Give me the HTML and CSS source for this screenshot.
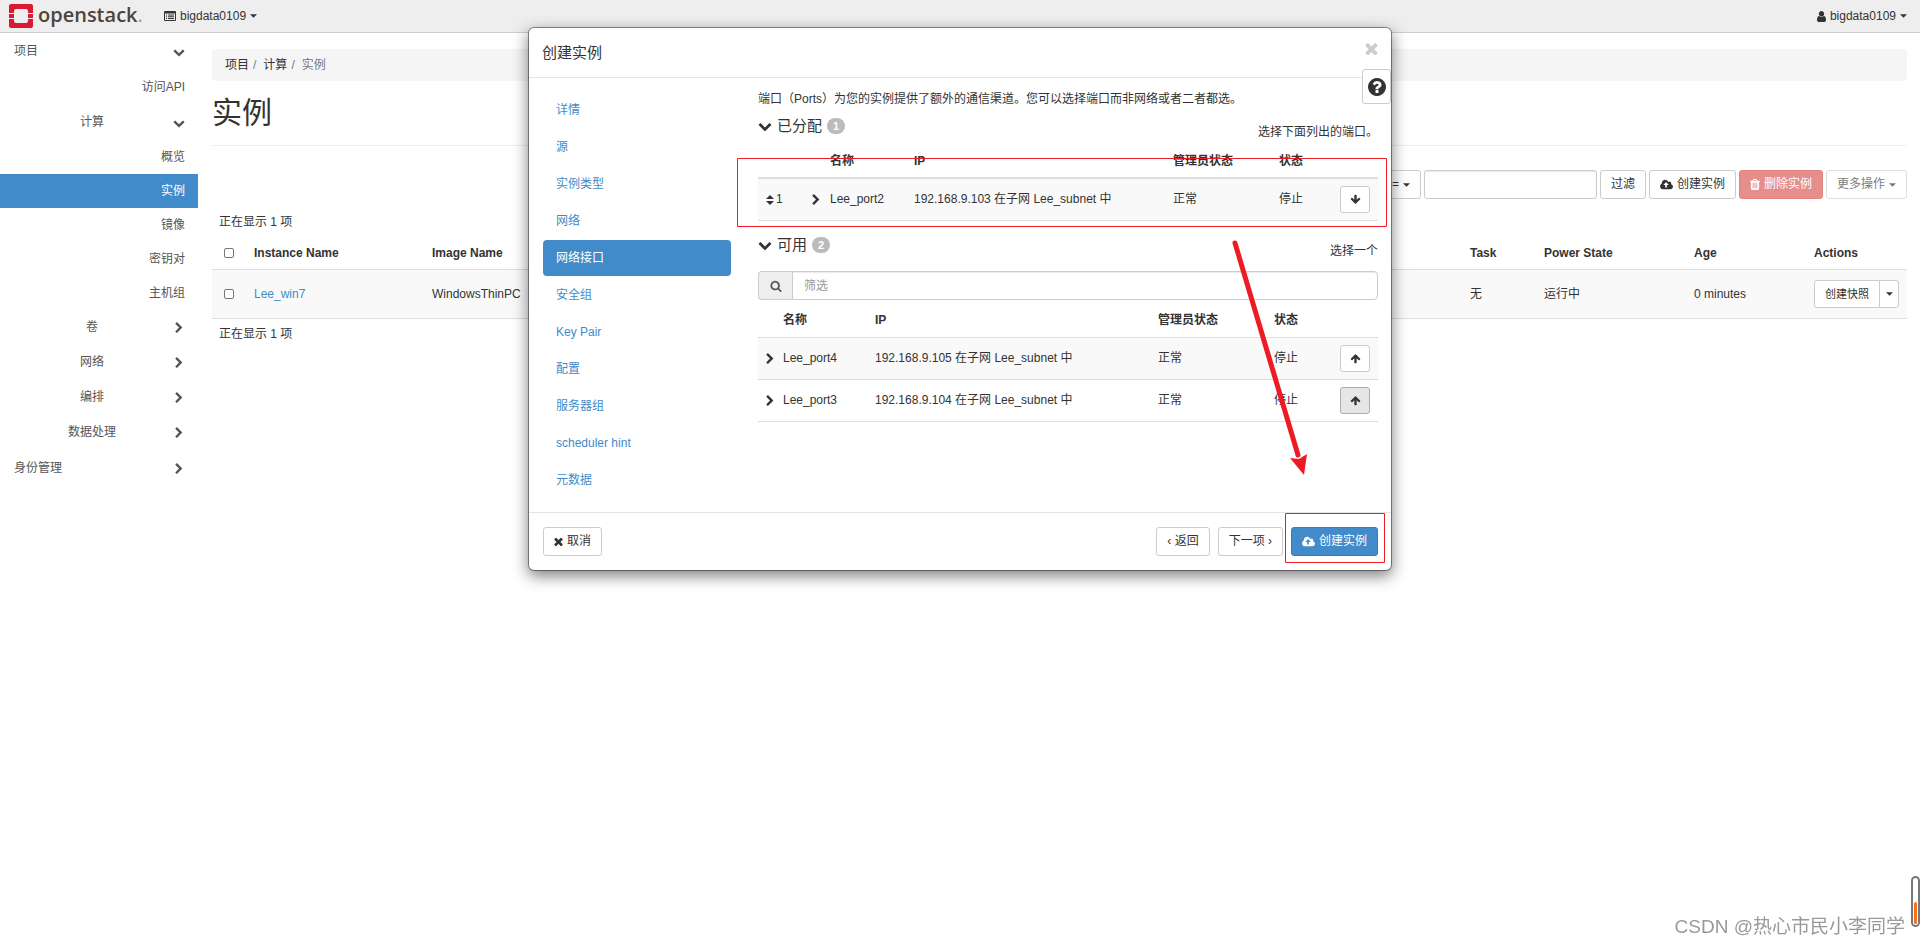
FILE: index.html
```html
<!DOCTYPE html>
<html lang="zh-CN">
<head>
<meta charset="utf-8">
<title>实例 - OpenStack Dashboard</title>
<link rel="stylesheet" href="styles.css">
</head>
<body>
<svg class="sprite" aria-hidden="true">
  <symbol id="chevron-down" viewBox="0 0 1792 1792"><path d="M1683 808l-742 741q-19 19-45 19t-45-19l-742-741q-19-19-19-45.500t19-45.500l166-165q19-19 45-19t45 19l531 531 531-531q19-19 45-19t45 19l166 165q19 19 19 45.500t-19 45.500z"/></symbol>
  <symbol id="chevron-right" viewBox="0 0 1792 1792"><path d="M1363 877l-742 742q-19 19-45 19t-45-19l-166-166q-19-19-19-45t19-45l531-531-531-531q-19-19-19-45t19-45l166-166q19-19 45-19t45 19l742 742q19 19 19 45t-19 45z"/></symbol>
  <symbol id="caret" viewBox="0 0 8 4"><path d="M0 0h8l-4 4z"/></symbol>
  <symbol id="search" viewBox="0 0 1792 1792"><path d="M1216 832q0-185-131.500-316.500t-316.500-131.500-316.500 131.500-131.500 316.500 131.500 316.500 316.500 131.500 316.500-131.500 131.500-316.500zm512 832q0 52-38 90t-90 38q-54 0-90-38l-343-342q-179 124-399 124-143 0-273.500-55.500t-225-150-150-225-55.500-273.500 55.500-273.500 150-225 225-150 273.500-55.500 273.500 55.500 225 150 150 225 55.500 273.500q0 220-124 399l343 343q37 37 37 90z"/></symbol>
  <symbol id="arrow-up" viewBox="0 0 1792 1792"><path d="M1675 971q0 51-37 90l-75 75q-38 38-91 38-54 0-90-38l-294-293v704q0 52-37.500 84.500t-90.500 32.500h-128q-53 0-90.500-32.500t-37.500-84.500v-704l-294 293q-36 38-90 38t-90-38l-75-75q-38-38-38-90 0-53 38-91l651-651q35-37 90-37 54 0 91 37l651 651q37 39 37 91z"/></symbol>
  <symbol id="arrow-down" viewBox="0 0 1792 1792"><path transform="rotate(180 896 896)" d="M1675 971q0 51-37 90l-75 75q-38 38-91 38-54 0-90-38l-294-293v704q0 52-37.500 84.500t-90.500 32.500h-128q-53 0-90.500-32.500t-37.500-84.500v-704l-294 293q-36 38-90 38t-90-38l-75-75q-38-38-38-90 0-53 38-91l651-651q35-37 90-37 54 0 91 37l651 651q37 39 37 91z"/></symbol>
  <symbol id="times" viewBox="256 256 1280 1280"><path d="M1490 1322q0 40-28 68l-136 136q-28 28-68 28t-68-28l-294-294-294 294q-28 28-68 28t-68-28l-136-136q-28-28-28-68t28-68l294-294-294-294q-28-28-28-68t28-68l136-136q28-28 68-28t68 28l294 294 294-294q28-28 68-28t68 28l136 136q28 28 28 68t-28 68l-294 294 294 294q28 28 28 68z"/></symbol>
  <symbol id="question" viewBox="128 128 1536 1536"><path d="M1024 1376v-192q0-14-9-23t-23-9h-192q-14 0-23 9t-9 23v192q0 14 9 23t23 9h192q14 0 23-9t9-23zm256-672q0-88-55.500-163t-138.500-116-170-41q-243 0-371 213-15 24 8 42l132 100q7 6 19 6 16 0 25-12 53-68 86-92 34-24 86-24 48 0 85.500 26t37.500 59q0 38-20 61t-68 45q-63 28-115.500 86.500t-52.500 125.500v36q0 14 9 23t23 9h192q14 0 23-9t9-23q0-19 21.500-49.500t54.500-49.500q32-18 49-28.500t46-35 44.500-48 28-60.500 12.500-81zm384 192q0 209-103 385.500t-279.500 279.500-385.500 103-385.500-103-279.500-279.500-103-385.500 103-385.500 279.500-279.500 385.500-103 385.500 103 279.500 279.500 103 385.500z"/></symbol>
  <symbol id="cloud" viewBox="-64 0 1920 1792"><path d="M1216 864q0-14-9-23l-352-352q-9-9-23-9t-23 9l-351 351q-10 12-10 24 0 14 9 23t23 9h224v352q0 13 9.500 22.500t22.500 9.500h192q13 0 22.500-9.500t9.500-22.500v-352h224q13 0 22.500-9.500t9.500-22.500zm640 288q0 159-112.500 271.500t-271.500 112.500h-1088q-185 0-316.500-131.500t-131.500-316.500q0-130 70-240t188-165q-2-30-2-43 0-212 150-362t362-150q156 0 285.500 87t188.500 231q71-62 166-62 106 0 181 75t75 181q0 76-41 138 130 31 213.500 135.500t83.500 238.500z"/></symbol>
  <symbol id="trash" viewBox="192 128 1408 1536"><path d="M704 1376v-704q0-14-9-23t-23-9h-64q-14 0-23 9t-9 23v704q0 14 9 23t23 9h64q14 0 23-9t9-23zm256 0v-704q0-14-9-23t-23-9h-64q-14 0-23 9t-9 23v704q0 14 9 23t23 9h64q14 0 23-9t9-23zm256 0v-704q0-14-9-23t-23-9h-64q-14 0-23 9t-9 23v704q0 14 9 23t23 9h64q14 0 23-9t9-23zm-544-992h448l-48-117q-7-9-17-11h-317q-10 2-17 11zm928 32v64q0 14-9 23t-23 9h-96v948q0 83-47 143.500t-113 60.500h-832q-66 0-113-58.500t-47-141.500v-952h-96q-14 0-23-9t-9-23v-64q0-14 9-23t23-9h309l70-167q15-37 54-63t79-26h320q40 0 79 26t54 63l70 167h309q14 0 23 9t9 23z"/></symbol>
  <symbol id="user" viewBox="256 128 1280 1536"><path d="M1536 1399q0 109-62.500 187t-150.500 78h-854q-88 0-150.500-78t-62.500-187q0-85 8.500-160.500t31.500-152 58.500-131 94-89 134.500-34.500q131 128 313 128t313-128q76 0 134.500 34.500t94 89 58.500 131 31.500 152 8.500 160.500zm-256-887q0 159-112.500 271.500t-271.500 112.500-271.500-112.500-112.500-271.500 112.500-271.500 271.500-112.500 271.500 112.500 112.500 271.500z"/></symbol>
  <symbol id="list-alt" viewBox="0 0 12 10"><path fill-rule="evenodd" d="M1 0h10q1 0 1 1v8q0 1-1 1H1Q0 10 0 9V1Q0 0 1 0zM1 2.500v6.500h10V2.500zM2 3.500h1v1H2zM4 3.500h6v1H4zM2 5.300h1v1H2zM4 5.300h6v1H4zM2 7.100h1v1H2zM4 7.100h6v1H4z"/></symbol>
  <symbol id="sort" viewBox="0 0 8 10"><path d="M0 4l4-4 4 4zM0 6h8l-4 4z"/></symbol>
</svg>

<header class="navbar">
  <a class="brand" href="#" aria-label="openstack">
    <svg class="brand-mark" viewBox="0 0 24 24"><path fill="#da1a32" d="M2 0h20q2 0 2 2v7h-5V7q0-2-2-2H7q-2 0-2 2v2H0V2q0-2 2-2zM0 10h5v4H0zM19 10h5v4h-5zM0 15h5v2q0 2 2 2h10q2 0 2-2v-2h5v7q0 2-2 2H2q-2 0-2-2z"/></svg>
    <span class="brand-name">openstack<span class="brand-dot">.</span></span>
  </a>
  <button class="nav-menu" type="button"><svg class="i-list"><use href="#list-alt"/></svg>bigdata0109<svg class="i-caret"><use href="#caret"/></svg></button>
  <button class="nav-menu nav-user" type="button"><svg class="i-user"><use href="#user"/></svg>bigdata0109<svg class="i-caret"><use href="#caret"/></svg></button>
</header>

<div class="layout">
  <nav class="sidebar">
    <a class="side-item side-top" href="#"><span>项目</span><svg class="i-12"><use href="#chevron-down"/></svg></a>
    <a class="side-item side-leaf" href="#">访问API</a>
    <a class="side-item side-group" href="#"><span>计算</span><svg class="i-12"><use href="#chevron-down"/></svg></a>
    <a class="side-item side-leaf side-sub" href="#">概览</a>
    <a class="side-item side-leaf side-sub active" href="#">实例</a>
    <a class="side-item side-leaf side-sub" href="#">镜像</a>
    <a class="side-item side-leaf side-sub" href="#">密钥对</a>
    <a class="side-item side-leaf side-sub" href="#">主机组</a>
    <a class="side-item side-group" href="#"><span>卷</span><svg class="i-12"><use href="#chevron-right"/></svg></a>
    <a class="side-item side-group" href="#"><span>网络</span><svg class="i-12"><use href="#chevron-right"/></svg></a>
    <a class="side-item side-group" href="#"><span>编排</span><svg class="i-12"><use href="#chevron-right"/></svg></a>
    <a class="side-item side-group" href="#"><span>数据处理</span><svg class="i-12"><use href="#chevron-right"/></svg></a>
    <a class="side-item side-top" href="#"><span>身份管理</span><svg class="i-12"><use href="#chevron-right"/></svg></a>
  </nav>

  <main class="content">
    <ol class="breadcrumb">
      <li><a href="#">项目</a></li>
      <li><a href="#">计算</a></li>
      <li class="current">实例</li>
    </ol>
    <h1 class="page-title">实例</h1>
    <div class="toolbar">
      <button class="btn btn-operator" type="button">=<svg class="i-caret"><use href="#caret"/></svg></button>
      <input class="field filter" type="text" aria-label="过滤条件">
      <button class="btn" type="button">过滤</button>
      <button class="btn" type="button"><svg class="i-cloud"><use href="#cloud"/></svg>创建实例</button>
      <button class="btn btn-danger" type="button" disabled><svg class="i-trash"><use href="#trash"/></svg>删除实例</button>
      <button class="btn" type="button" disabled>更多操作<svg class="i-caret"><use href="#caret"/></svg></button>
    </div>
    <p class="count">正在显示 1 项</p>
    <table class="instances">
      <colgroup><col class="c-check"><col class="c-name"><col><col class="c-task"><col class="c-power"><col class="c-age"><col class="c-actions"></colgroup>
      <thead>
        <tr><th><input class="check" type="checkbox" aria-label="全选"></th><th>Instance Name</th><th>Image Name</th><th>Task</th><th>Power State</th><th>Age</th><th>Actions</th></tr>
      </thead>
      <tbody>
        <tr><td><input class="check" type="checkbox" aria-label="Lee_win7"></td><td><a href="#">Lee_win7</a></td><td>WindowsThinPC</td><td>无</td><td>运行中</td><td>0 minutes</td>
          <td><div class="btn-group"><button class="btn btn-sm" type="button">创建快照</button><button class="btn btn-sm btn-toggle" type="button" aria-label="更多"><svg class="i-caret"><use href="#caret"/></svg></button></div></td></tr>
      </tbody>
    </table>
    <p class="count">正在显示 1 项</p>
  </main>
</div>

<div class="overlay">
  <section class="modal" role="dialog" aria-labelledby="modal-title">
    <header class="modal-header">
      <h2 id="modal-title">创建实例</h2>
      <button class="close" type="button" aria-label="关闭"><svg><use href="#times"/></svg></button>
    </header>
    <button class="help" type="button" aria-label="帮助"><svg><use href="#question"/></svg></button>
    <div class="modal-body">
      <nav class="steps">
        <a href="#">详情</a>
        <a href="#">源</a>
        <a href="#">实例类型</a>
        <a href="#">网络</a>
        <a class="active" href="#">网络接口</a>
        <a href="#">安全组</a>
        <a href="#">Key Pair</a>
        <a href="#">配置</a>
        <a href="#">服务器组</a>
        <a href="#">scheduler hint</a>
        <a href="#">元数据</a>
      </nav>
      <div class="step-content">
        <p class="intro">端口（Ports）为您的实例提供了额外的通信渠道。您可以选择端口而非网络或者二者都选。</p>
        <div class="section-head">
          <h3><svg class="i-14"><use href="#chevron-down"/></svg>已分配<span class="badge">1</span></h3>
          <span class="hint">选择下面列出的端口。</span>
        </div>
        <table class="ports allocated">
          <colgroup><col class="p-order"><col class="p-expand"><col class="p-name"><col><col class="p-admin"><col class="p-status"><col class="p-action"></colgroup>
          <thead><tr><th></th><th></th><th>名称</th><th>IP</th><th>管理员状态</th><th>状态</th><th></th></tr></thead>
          <tbody>
            <tr><td><svg class="i-sort"><use href="#sort"/></svg>1</td><td><svg class="i-12"><use href="#chevron-right"/></svg></td><td>Lee_port2</td><td>192.168.9.103 在子网 Lee_subnet 中</td><td>正常</td><td>停止</td><td><button class="btn btn-arrow" type="button" aria-label="移除"><svg class="i-12"><use href="#arrow-down"/></svg></button></td></tr>
          </tbody>
        </table>
        <div class="section-head">
          <h3><svg class="i-14"><use href="#chevron-down"/></svg>可用<span class="badge">2</span></h3>
          <span class="hint">选择一个</span>
        </div>
        <div class="search">
          <label for="port-filter" aria-label="筛选"><svg class="i-12"><use href="#search"/></svg></label>
          <input class="field" id="port-filter" type="text" placeholder="筛选">
        </div>
        <table class="ports available">
          <colgroup><col class="a-expand"><col class="a-name"><col><col class="a-admin"><col class="a-status"><col class="p-action"></colgroup>
          <thead><tr><th></th><th>名称</th><th>IP</th><th>管理员状态</th><th>状态</th><th></th></tr></thead>
          <tbody>
            <tr><td><svg class="i-12"><use href="#chevron-right"/></svg></td><td>Lee_port4</td><td>192.168.9.105 在子网 Lee_subnet 中</td><td>正常</td><td>停止</td><td><button class="btn btn-arrow" type="button" aria-label="分配"><svg class="i-12"><use href="#arrow-up"/></svg></button></td></tr>
            <tr><td><svg class="i-12"><use href="#chevron-right"/></svg></td><td>Lee_port3</td><td>192.168.9.104 在子网 Lee_subnet 中</td><td>正常</td><td>停止</td><td><button class="btn btn-arrow pressed" type="button" aria-label="分配"><svg class="i-12"><use href="#arrow-up"/></svg></button></td></tr>
          </tbody>
        </table>
      </div>
    </div>
    <footer class="modal-footer">
      <button class="btn" type="button"><svg class="i-times"><use href="#times"/></svg>取消</button>
      <button class="btn push" type="button">‹ 返回</button>
      <button class="btn" type="button">下一项 ›</button>
      <button class="btn btn-primary" type="button"><svg class="i-cloud"><use href="#cloud"/></svg>创建实例</button>
    </footer>
    <svg class="marks" viewBox="0 0 864 544" aria-hidden="true">
      <path class="mark-box" d="M208.500 130.500h649v68h-649zM756.500 485.500h99v49h-99z"/>
      <path class="mark-line" d="M706 215l63 212"/>
      <path class="mark-head" d="M761 430l14 17 3-21-8 5z"/>
    </svg>
  </section>
</div>

<div class="watermark">CSDN @热心市民小李同学</div>
<div class="meter"><span></span></div>
</body>
</html>
```
FILE: styles.css
```css
* { box-sizing: border-box; }
body {
  margin: 0;
  min-height: 100vh;
  background: #fff;
  color: #333;
  font: 12px/17px "Liberation Sans", "Noto Sans CJK SC", sans-serif;
}
button, input { font: inherit; color: inherit; }
a { color: #428bca; text-decoration: none; }
svg { fill: currentColor; flex: none; }
.sprite { display: none; }

.i-12 { width: 12px; height: 12px; }
.i-14 { width: 14px; height: 14px; }
.i-caret { width: 7px; height: 4px; }
.i-list { width: 12px; height: 10px; }
.i-user { width: 9px; height: 11px; }
.i-cloud { width: 13px; height: 12px; }
.i-trash { width: 10px; height: 11px; }
.i-times { width: 9px; height: 9px; }
.i-sort { width: 8px; height: 10px; margin-right: 2px; }

/* Top bar */
.navbar {
  display: flex;
  align-items: center;
  height: 33px;
  padding: 0 13px 0 9px;
  background: #eee;
  border-bottom: 1px solid #ccc;
}
.brand { display: flex; align-items: center; gap: 5px; width: 155px; color: #4d443d; }
.brand-mark { width: 24px; height: 24px; }
.brand-name { padding-bottom: 2px; font: 600 20px/24px "Open Sans", sans-serif; }
.brand-dot { color: #999; font-weight: 400; }
.nav-menu { display: flex; align-items: center; gap: 4px; padding: 0; border: 0; background: none; }
.nav-user { margin-left: auto; }

.layout { display: flex; }

/* Side navigation */
.sidebar { width: 198px; flex: none; }
.side-item {
  display: flex;
  align-items: center;
  height: 35px;
  padding: 0 13px 0 11px;
  color: #555;
}
.side-item span { flex: 1; }
.side-top { height: 37px; padding-left: 14px; }
.side-group span { text-align: center; }
.side-leaf { justify-content: flex-end; }
.side-sub { height: 34px; }
.side-item.active { background: #428bca; color: #fff; }

/* Page content */
.content { flex: 1; min-width: 0; padding: 16px 13px 0 14px; }
.breadcrumb {
  display: flex;
  align-items: center;
  height: 32px;
  margin: 0;
  padding: 0 13px;
  list-style: none;
  background: #f5f5f5;
  border-radius: 4px;
}
.breadcrumb a { color: #333; }
.breadcrumb li + li::before { content: "/"; padding: 0 7px 0 4px; color: #777; }
.breadcrumb .current { color: #777; }
.page-title {
  margin: 15px 0 24px;
  padding-bottom: 15px;
  border-bottom: 1px solid #eee;
  font-size: 30px;
  line-height: 34px;
  font-weight: 400;
}
.toolbar { display: flex; justify-content: flex-end; gap: 3px; margin-bottom: 15px; }
.btn {
  display: inline-flex;
  align-items: center;
  justify-content: center;
  gap: 4px;
  height: 29px;
  padding: 0 10px;
  border: 1px solid #ccc;
  border-radius: 3px;
  background: #fff;
  white-space: nowrap;
}
.btn:disabled { opacity: .65; }
.btn-operator { width: 60px; justify-content: flex-end; }
.btn-danger { background: #d9534f; border-color: #d43f3a; color: #fff; }
.btn-primary { background: #428bca; border-color: #357ebd; color: #fff; }
.btn-sm { height: 28px; font-size: 11px; }
.btn-group { display: flex; }
.btn-group .btn:first-child { border-radius: 3px 0 0 3px; }
.btn-toggle { width: 22px; margin-left: -1px; padding: 0; border-radius: 0 3px 3px 0; }
.field {
  height: 29px;
  padding: 0 11px;
  border: 1px solid #ccc;
  border-radius: 3px;
  background: #fff;
  box-shadow: inset 0 1px 1px rgba(0, 0, 0, .08);
}
.filter { width: 173px; }
.count { margin: 0; padding: 0 7px; }

table { width: 100%; border-collapse: separate; border-spacing: 0; table-layout: fixed; }
th, td { padding: 0 8px; text-align: left; white-space: nowrap; }
td > svg { vertical-align: middle; }
.instances { margin-bottom: 7px; }
.instances th { height: 39px; padding-top: 6px; border-bottom: 1px solid #ddd; }
.instances td { height: 49px; background: #f9f9f9; border-bottom: 1px solid #ddd; }
.c-check { width: 34px; }
.c-name { width: 178px; }
.c-task { width: 74px; }
.c-power { width: 150px; }
.c-age { width: 120px; }
.c-actions { width: 101px; }
.check {
  appearance: none;
  display: block;
  width: 10px;
  height: 10px;
  margin: 0 0 0 4px;
  border: 1px solid #767676;
  border-radius: 2px;
  background: #fff;
}

/* Launch dialog */
.overlay { position: absolute; inset: 0; display: flex; justify-content: center; align-items: flex-start; padding-top: 27px; }
.modal {
  position: relative;
  width: 45%;
  min-width: 864px;
  border: 1px solid rgba(0, 0, 0, .4);
  border-radius: 6px;
  background: #fff;
  background-clip: padding-box;
  box-shadow: 0 5px 15px rgba(0, 0, 0, .5);
}
.modal-header {
  display: flex;
  align-items: center;
  justify-content: space-between;
  height: 50px;
  padding: 0 13px;
  border-bottom: 1px solid #e5e5e5;
}
.modal-header h2 { margin: 0; font-size: 15px; line-height: 22px; font-weight: 400; }
.close { align-self: flex-start; margin-top: 14px; padding: 0; border: 0; background: none; color: #ccc; line-height: 0; }
.close svg { width: 13px; height: 13px; }
.help {
  position: absolute;
  top: 41px;
  right: 0;
  width: 29px;
  height: 35px;
  padding: 0;
  border: 1px solid #ccc;
  border-radius: 3px;
  background: #fff;
  line-height: 0;
}
.help svg { width: 18px; height: 18px; }
.modal-body { display: flex; gap: 27px; padding: 14px 13px 14px 14px; }
.steps { display: flex; flex-direction: column; gap: 1px; width: 188px; flex: none; }
.steps a { height: 36px; padding: 0 13px; line-height: 36px; border-radius: 4px; }
.steps .active { background: #428bca; color: #fff; }
.step-content { flex: 1; min-width: 0; margin-top: -1px; }
.intro { margin: 0 0 6px; }
.section-head { display: flex; justify-content: space-between; height: 31px; }
.section-head h3 { display: flex; align-items: center; gap: 5px; height: 24px; margin: 0; font-size: 15px; line-height: 22px; font-weight: 400; }
.badge {
  min-width: 18px;
  padding: 0 6px;
  border-radius: 8px;
  background: #bbb;
  color: #fff;
  font-size: 11px;
  line-height: 16px;
  font-weight: bold;
}
.hint { align-self: flex-end; margin-bottom: 4px; }
.ports td { height: 42px; border-bottom: 1px solid #ddd; }
.ports tbody tr:first-child { background: #f9f9f9; }
.ports td:first-child { padding-right: 0; }
.p-order { width: 44px; }
.p-expand { width: 20px; }
.p-name { width: 84px; }
.p-admin { width: 106px; }
.p-status { width: 61px; }
.p-action { width: 46px; }
.allocated { margin-bottom: 12px; }
.allocated th { height: 34px; border-bottom: 2px solid #ddd; }
.available th { height: 38px; padding-top: 3px; border-bottom: 1px solid #ddd; }
.available td:first-child { padding-left: 6px; }
.a-expand { width: 17px; }
.a-name { width: 92px; }
.a-admin { width: 116px; }
.a-status { width: 66px; }
.btn-arrow { width: 30px; height: 27px; padding: 0; vertical-align: middle; }
.btn-arrow .i-12 { width: 11px; height: 11px; }
.pressed { background: #e6e6e6; border-color: #adadad; }
.search { display: flex; margin-top: 7px; }
.search label {
  display: flex;
  align-items: center;
  justify-content: center;
  width: 34px;
  border: 1px solid #ccc;
  border-right: 0;
  border-radius: 4px 0 0 4px;
  background: #eee;
  color: #555;
}
.search .field { flex: 1; min-width: 0; border-radius: 0 4px 4px 0; }
.search .field::placeholder { color: #999; opacity: 1; }
.modal-footer { display: flex; gap: 8px; padding: 14px 13px 14px 14px; border-top: 1px solid #e5e5e5; }
.push { margin-left: auto; }

/* Drawn callouts over the dialog */
.marks { position: absolute; top: 0; left: 0; width: 864px; height: 544px; pointer-events: none; }
.mark-box { fill: none; stroke: #ed1c24; }
.mark-line { stroke: #ed1c24; stroke-width: 5; stroke-linecap: round; }
.mark-head { fill: #ed1c24; }

.watermark { position: fixed; right: 15px; bottom: 6px; color: #999; font-size: 19px; line-height: 26px; text-shadow: 1px 1px 0 #fff; }
.meter {
  position: fixed;
  right: 0;
  bottom: 19px;
  display: flex;
  align-items: flex-end;
  width: 9px;
  height: 51px;
  padding: 1px;
  border: 2px solid #777;
  border-radius: 5px;
  background: #fff;
}
.meter span { flex: 1; height: 22px; border-radius: 2px; background: #f97316; }
```
